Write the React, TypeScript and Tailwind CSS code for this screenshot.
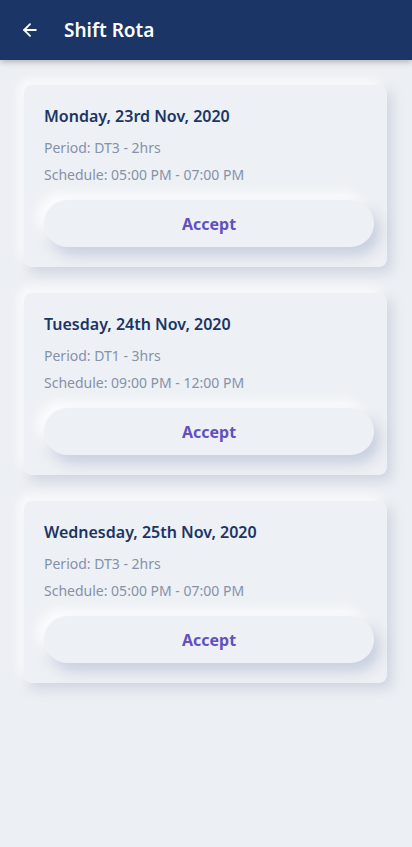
import { ArrowLeft } from "lucide-react";

type shiftItem = {
  date: string;
  period: string;
  schedule: string;
};

const shifts: shiftItem[] = [
  {
    date: "Monday, 23rd Nov, 2020",
    period: "Period: DT3 - 2hrs",
    schedule: "Schedule: 05:00 PM - 07:00 PM",
  },
  {
    date: "Tuesday, 24th Nov, 2020",
    period: "Period: DT1 - 3hrs",
    schedule: "Schedule: 09:00 PM - 12:00 PM",
  },
  {
    date: "Wednesday, 25th Nov, 2020",
    period: "Period: DT3 - 2hrs",
    schedule: "Schedule: 05:00 PM - 07:00 PM",
  },
];

export default function App() {
  return (
    <div
      className="min-h-[847px] w-[412px] bg-[#eceff3]"
      style={{ fontFamily: '"Noto Sans", "Open Sans", sans-serif' }}
    >
      <div className="h-[60px] bg-[#1a3566] flex items-center px-5 gap-[24px] shadow-[0_2px_6px_rgba(0,0,0,0.25)]">
        <ArrowLeft className="text-white w-[20px] h-[20px]" strokeWidth={2.2} />
        <h1 className="text-white text-[19px] font-semibold">Shift Rota</h1>
      </div>
      <div className="flex flex-col gap-[26px] pt-[25px] px-6">
        {shifts.map((shift, index) => {
          return (
            <div
              key={index}
              className="w-[363px] h-[182px] rounded-[8px] bg-[#edf0f4] pt-[20px] pl-5 flex flex-col shadow-[5px_6px_12px_rgba(170,182,205,0.45),-5px_-5px_12px_rgba(255,255,255,0.9)]"
            >
              <p className="text-[16px] leading-[22px] font-semibold text-[#1a3566]">
                {shift.date}
              </p>
              <p className="mt-[11px] text-[14px] leading-[20px] text-[#8592a9]">
                {shift.period}
              </p>
              <p className="mt-[7px] text-[14px] leading-[20px] text-[#8592a9]">
                {shift.schedule}
              </p>
              <button className="block mt-[15px] w-[330px] h-[47px] shrink-0 rounded-full bg-[#edf0f4] text-[16px] font-bold text-[#6450bd] shadow-[6px_8px_14px_rgba(165,178,205,0.55),-6px_-6px_14px_rgba(255,255,255,1)]">
                Accept
              </button>
            </div>
          );
        })}
      </div>
    </div>
  );
}
